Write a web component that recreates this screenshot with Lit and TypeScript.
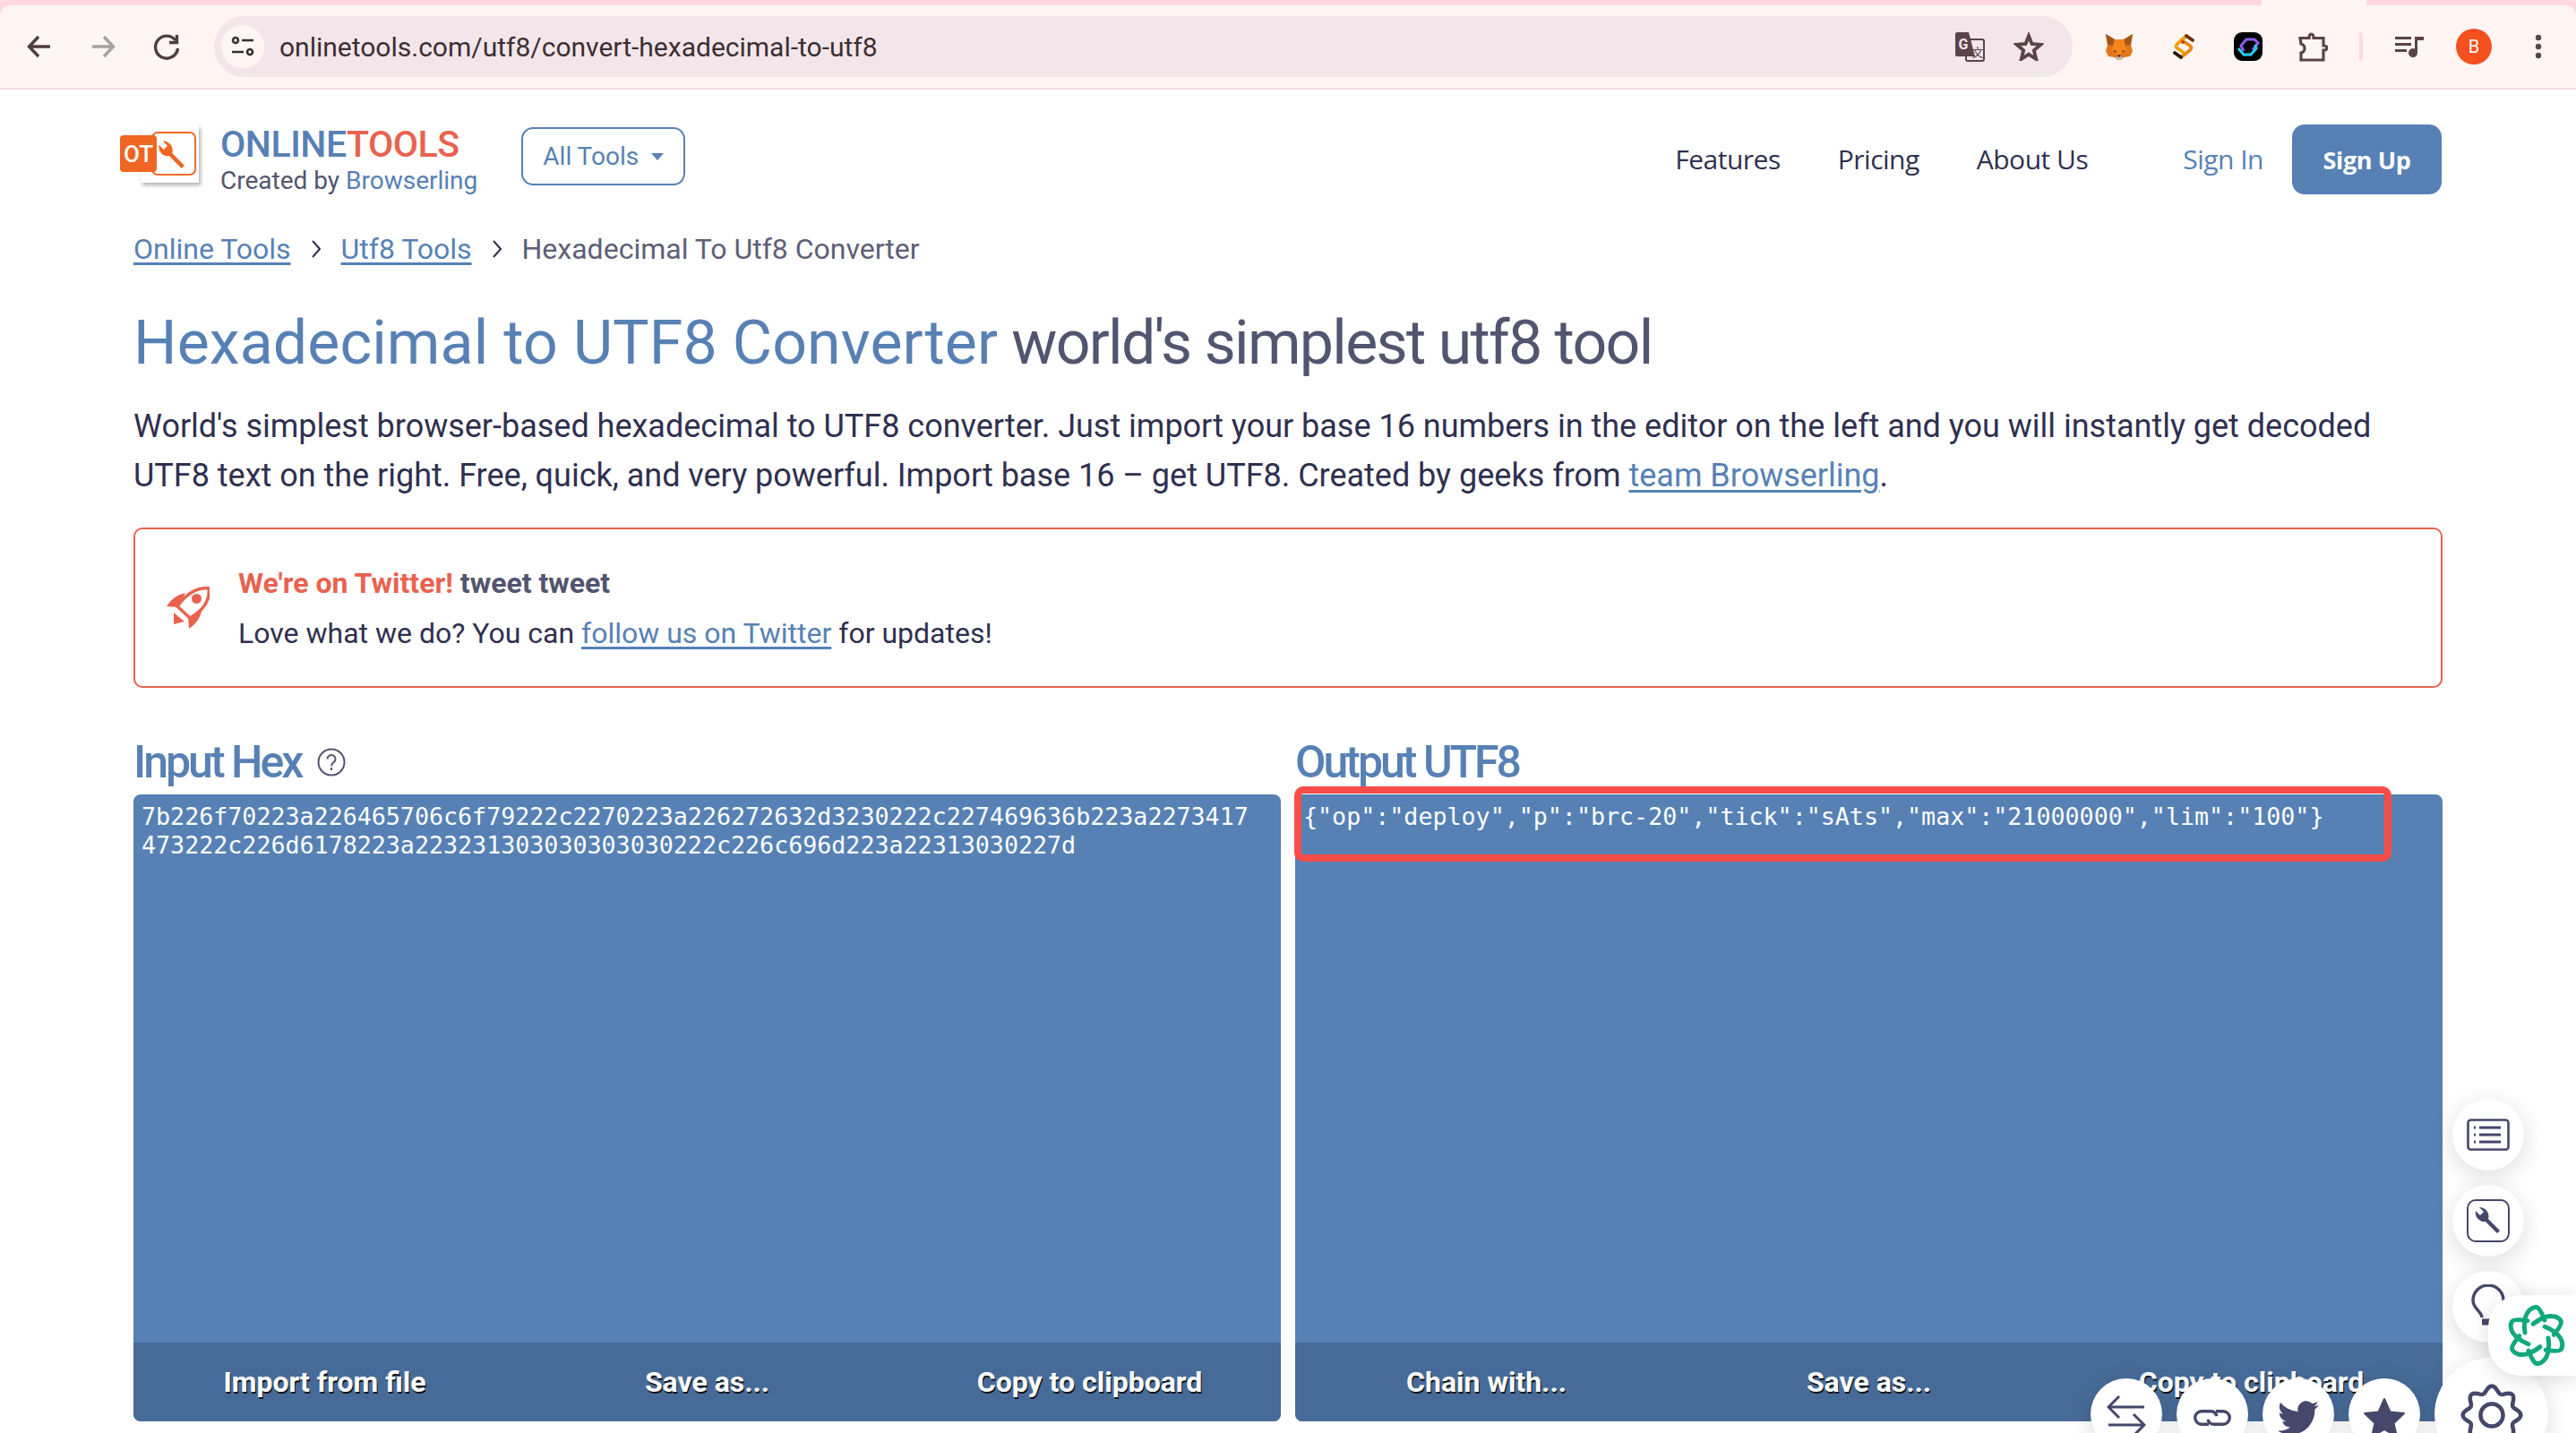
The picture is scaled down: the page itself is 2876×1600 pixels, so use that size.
import { LitElement, css, html, svg } from 'lit';
import { customElement } from 'lit/decorators.js';

const HEX = '7b226f70223a226465706c6f79222c2270223a226272632d3230222c227469636b223a227341747 3222c226d6178223a223231303030303030222c226c696d223a22313030227d'.replace(' ', '');
const UTF8 = '{"op":"deploy","p":"brc-20","tick":"sAts","max":"21000000","lim":"100"}';
const WRENCH = 'M10 13l5 5 4-4-5-5A10 10 0 0 1 24 22l13 13-3 3-13-13A10 10 0 0 1 10 13z';

// scalloped outline for the settings button
function gearPath(lobes: number, outer: number, inner: number) {
    const steps = lobes * 12;
    let d = '';
    for (let i = 0; i <= steps; i++) {
        const a = (i / steps) * Math.PI * 2;
        const r = (outer + inner) / 2 + ((outer - inner) / 2) * Math.cos(a * lobes);
        d += `${i ? 'L' : 'M'}${(40 + r * Math.sin(a)).toFixed(2)} ${(40 - r * Math.cos(a)).toFixed(2)}`;
    }
    return d + 'Z';
}

@customElement('app-root')
export class AppRoot extends LitElement {
    static styles = css`
      :host {
        display: block;
        position: relative;
        width: 2876px;
        height: 1600px;
        overflow: hidden;
        background: #fff;
        font-family: Roboto, sans-serif;
        color: #2f3050;
      }

      a {
        color: #5781b5;
        text-decoration: underline;
        text-underline-offset: 4px;
      }

      /* browser chrome */
      .chrome {
        background: #ffd9e0;
      }

      .tabs {
        height: 6px;
        padding-left: 2525px;
      }

      .tab {
        width: 117px;
        height: 6px;
        background: #fff5f3;
      }

      .toolbar {
        display: flex;
        align-items: center;
        height: 94px;
        box-sizing: border-box;
        background: #fff5f3;
        border-bottom: 2px solid #f6dce2;
        border-radius: 12px 12px 0 0;
      }

      .toolbar svg {
        display: block;
        flex: none;
      }

      .nav-icons {
        display: flex;
        gap: 35px;
        padding-left: 26px;
      }

      .omnibox {
        display: flex;
        align-items: center;
        width: 2075px;
        height: 68px;
        margin-left: 35px;
        padding-left: 8px;
        box-sizing: border-box;
        border-radius: 34px;
        background: #f3e6ea;
      }

      .tune {
        display: flex;
        align-items: center;
        justify-content: center;
        width: 48px;
        height: 48px;
        border-radius: 50%;
        background: #fff5f3;
      }

      .url {
        margin-left: 17px;
        flex: 1;
        font-size: 30px;
        color: #3b2f33;
      }

      .omni-actions {
        display: flex;
        align-items: center;
        gap: 32px;
        padding-right: 32px;
      }

      .extensions {
        display: flex;
        align-items: center;
        margin-left: 16px;
      }

      .ext {
        display: flex;
        justify-content: center;
        align-items: center;
        width: 72px;
      }

      .divider {
        width: 4px;
        height: 32px;
        margin: 0 16px;
        background: #ffd9e0;
        border-radius: 2px;
      }

      .avatar {
        width: 40px;
        height: 40px;
        border-radius: 50%;
        background: #f4511e;
        color: #fff;
        font-size: 20px;
        line-height: 40px;
        text-align: center;
      }

      /* site header */
      .header {
        display: flex;
        align-items: flex-start;
        padding: 39px 150px 0 134px;
      }

      .logo {
        flex: none;
        margin-top: 8px;
      }

      .brand {
        height: 78px;
        margin-left: 12px;
      }

      .brand-name {
        font-size: 41px;
        line-height: 45px;
        font-weight: 500;
        letter-spacing: -0.45px;
        color: #5781b5;
      }

      .brand-name span {
        color: #e8634f;
      }

      .brand-sub {
        font-size: 28px;
        line-height: 35px;
        color: #52556f;
      }

      .brand-sub span {
        color: #5781b5;
      }

      .all-tools {
        display: flex;
        align-items: center;
        gap: 14px;
        height: 65px;
        box-sizing: border-box;
        margin: 3px 0 0 49px;
        padding: 0 22px;
        border: 2px solid #5781b5;
        border-radius: 13px;
        font-size: 28px;
        color: #5781b5;
      }

      .caret {
        width: 0;
        height: 0;
        border: 7px solid transparent;
        border-top: 8px solid #5781b5;
        border-bottom: 0;
      }

      .menu {
        display: flex;
        align-items: center;
        gap: 64px;
        height: 76px;
        margin-left: auto;
        font-family: 'Open Sans', sans-serif;
        font-size: 30px;
        font-weight: 500;
        letter-spacing: -0.5px;
        color: #2f3050;
      }

      .sign-in {
        margin-left: 42px;
        color: #5781b5;
      }

      .sign-up {
        display: flex;
        align-items: center;
        justify-content: center;
        width: 167px;
        height: 78px;
        margin-left: 32px;
        border-radius: 14px;
        background: #5781b5;
        font-family: 'Open Sans', sans-serif;
        font-size: 27px;
        font-weight: 700;
        letter-spacing: -0.4px;
        color: #fff;
      }

      /* page body */
      .page {
        padding: 0 149px;
      }

      .crumbs {
        display: flex;
        align-items: center;
        gap: 23px;
        margin-top: 41px;
        font-size: 32px;
        line-height: 40px;
        color: #5d6077;
      }

      h1 {
        margin: 43px 0 0;
        font-size: 68px;
        line-height: 84px;
        font-weight: 400;
        letter-spacing: -1.7px;
        color: #52556f;
      }

      h1 span {
        letter-spacing: 0.12px;
        color: #5781b5;
      }

      .intro {
        margin: 24px 0 0;
        font-size: 36px;
        line-height: 55px;
        letter-spacing: -0.012px;
        color: #2f3050;
      }

      .notice {
        display: flex;
        align-items: center;
        gap: 32px;
        height: 179px;
        box-sizing: border-box;
        margin-top: 30px;
        padding-left: 35px;
        border: 2px solid #e8634f;
        border-radius: 10px;
      }

      .notice-text {
        font-size: 32px;
        line-height: 56px;
      }

      .notice-head {
        font-weight: 700;
        color: #52556f;
      }

      .notice-head span {
        color: #e8634f;
      }

      .tools {
        display: grid;
        grid-template-columns: 1281px 1281px;
        gap: 16px;
        margin-top: 52px;
      }

      .tool {
        position: relative;
      }

      h2 {
        display: flex;
        align-items: center;
        gap: 18px;
        height: 60px;
        box-sizing: border-box;
        margin: 0 0 7px;
        padding-top: 2px;
        font-size: 50px;
        font-weight: 500;
        letter-spacing: -3px;
        color: #5781b5;
      }

      .panel {
        display: flex;
        flex-direction: column;
        height: 700px;
        border-radius: 8px;
        overflow: hidden;
        background: #5781b5;
      }

      .panel-text {
        flex: 1;
        padding: 9px 30px 0 9px;
        font-family: 'DejaVu Sans Mono', monospace;
        font-size: 26.67px;
        line-height: 32px;
        word-break: break-all;
        color: #fff;
      }

      .panel-foot {
        display: grid;
        grid-template-columns: repeat(3, 1fr);
        align-items: center;
        height: 88px;
        background: #476b98;
      }

      .panel-foot span {
        font-size: 32px;
        font-weight: 700;
        text-align: center;
        color: #fff;
        text-shadow: 1px 2px 0 #111;
      }

      .highlight {
        position: absolute;
        top: 58px;
        left: -1px;
        width: 1225px;
        height: 84px;
        box-sizing: border-box;
        border: 8px solid #f84c48;
        border-radius: 10px;
      }

      /* floating widgets over the page */
      .fab {
        display: flex;
        align-items: center;
        justify-content: center;
        width: 80px;
        height: 80px;
        flex: none;
        border-radius: 50%;
        background: #fff;
        box-shadow: 0 6px 26px rgba(0, 0, 0, 0.14);
      }

      .fab-column {
        position: absolute;
        left: 2738px;
        top: 1227px;
        display: flex;
        flex-direction: column;
        gap: 16px;
      }

      .fab-row {
        position: absolute;
        left: 2334px;
        top: 1539px;
        display: flex;
        gap: 16px;
      }

      .fab-row svg {
        margin-top: 8px;
      }

      .fab-row .arrows {
        margin-top: 0;
      }

      .fab-gear {
        position: absolute;
        left: 2718px;
        top: 1516px;
        width: 127px;
        height: 127px;
      }

      .assistant {
        position: absolute;
        left: 2778px;
        top: 1446px;
        display: flex;
        align-items: center;
        width: 98px;
        height: 90px;
        padding-left: 20px;
        box-sizing: border-box;
        border-radius: 36px 0 0 36px;
        background: #fff;
        box-shadow: 0 4px 22px rgba(0, 0, 0, 0.14);
      }
    `;

    private arrowIcons() {
        return html`
            <div class="nav-icons">
                <svg width="36" height="36" viewBox="0 0 36 36" fill="none" stroke="#4f3d42" stroke-width="3.4"><path d="M30 18H7M17 7 6.500 18 17 29"/></svg>
                <svg width="36" height="36" viewBox="0 0 36 36" fill="none" stroke="#a9a0a2" stroke-width="3.4"><path d="M6 18h23M19 7l10.500 11L19 29"/></svg>
                <svg width="36" height="36" viewBox="0 0 36 36" fill="none" stroke="#4f3d42" stroke-width="3.4"><path d="M28 11a12.500 12.500 0 1 0 2.500 9"/><path d="M29.500 5v8.500H21" /></svg>
            </div>
        `;
    }

    private extensionIcons() {
        return html`
            <div class="extensions">
                <div class="ext">
                    <svg width="32" height="30" viewBox="0 0 32 30">
                        <path fill="#e2761b" d="M1 1l10 6h10l10-6-2 12 2 7-3 6-7 1-3 3h-4l-3-3-7-1-3-6 2-7z"/>
                        <path fill="#a3561a" d="M1 1l10 6-2 7-6-1zM31 1L21 7l2 7 6-1z"/>
                        <path fill="#f6851b" d="M11 7h10l2 7 1 6-8 5-8-5 1-6z"/>
                        <path fill="#763d16" d="M9 20l3-1 1 3zM23 20l-3-1-1 3z"/>
                        <path fill="#c9b9aa" d="M12 27l2 3h4l2-3-4-2z"/>
                        <path fill="#233447" d="M14 25l2 2 2-2-2-1z"/>
                    </svg>
                </div>
                <div class="ext">
                    <svg width="24" height="30" viewBox="0 0 24 30" fill="none" stroke-width="3.800" stroke-linecap="round" stroke-linejoin="round">
                        <path stroke="#f59e0b" d="M15 3 5 12q-3 3 0 5l6 4"/>
                        <path stroke="#6b3410" d="M15 3l7 5"/>
                        <path stroke="#e8870e" d="M13 10l6 4q3 2 0 5L9 27"/>
                        <path stroke="#2a1608" d="M2 22l7 5"/>
                        <circle cx="11" cy="10" r="2" fill="#c2410c"/>
                    </svg>
                </div>
                <div class="ext">
                    <svg width="32" height="32" viewBox="0 0 32 32" fill="none" stroke-width="3">
                        <rect width="32" height="32" rx="9" fill="#000"/>
                        <path stroke="#8b5cf6" d="M11 21 8 15l6-7h9l4 4-6 8"/>
                        <path stroke="#22d3ee" d="M5 18l6 7h8l6-7-1-4"/>
                    </svg>
                </div>
                <div class="ext">
                    <svg width="33" height="33" viewBox="0 0 33 33" fill="none" stroke="#5a444a" stroke-width="3.200"><path d="M2 6.500h10Q12 2 14.500 2T17 6.500h11V15q4 0 4 2.500T28 20v11H3v-8q4-1 4-5t-4-5z"/></svg>
                </div>
                <div class="divider"></div>
                <div class="ext">
                    <svg width="32" height="24" viewBox="0 0 32 24" fill="#5a444a"><path d="M0 1h18v3H0zM0 8h18v3H0zM0 15h13v3H0z"/><path d="M22 1h10v4h-7v14a5 5 0 1 1-3-4.500z"/></svg>
                </div>
                <div class="ext"><div class="avatar">B</div></div>
                <div class="ext">
                    <svg width="10" height="28" viewBox="0 0 10 28" fill="#5a444a"><circle cx="5" cy="4" r="3.200"/><circle cx="5" cy="14" r="3.200"/><circle cx="5" cy="24" r="3.200"/></svg>
                </div>
            </div>
        `;
    }

    private logo() {
        return html`
            <svg class="logo" width="100" height="58" viewBox="0 0 100 58" style="overflow: visible">
                <rect x="23" y="-7" width="65" height="64" fill="#fff" style="filter: drop-shadow(2px 3px 2px rgba(0,0,0,.3))"/>
                <rect x="36" y="1" width="48" height="47" rx="6" fill="#fff" stroke="#ef6a2b" stroke-width="2"/>
                <rect y="4" width="41" height="41" rx="4" fill="#ef6522"/>
                <text x="20.500" y="33.500" text-anchor="middle" font-family="Roboto, sans-serif" font-size="26" font-weight="500" fill="#fff">OT</text>
                <path fill="#ef6522" transform="translate(33 1) scale(1.05)" d=${WRENCH}/>
            </svg>
        `;
    }

    private panelTool(title: string, text: string, actions: string[], help = false, marked = false) {
        return html`
            <section class="tool">
                <h2>
                    ${title}
                    ${help
                        ? html`<svg width="32" height="32" viewBox="0 0 32 32" fill="none" stroke="#52556f" stroke-width="2"><circle cx="16" cy="16" r="14.500"/><path d="M11.500 12.500a4.500 4.500 0 1 1 7 3.700c-1.500 1-2.500 2-2.500 4M16 22v3"/></svg>`
                        : ''}
                </h2>
                <div class="panel">
                    <div class="panel-text">${text}</div>
                    <div class="panel-foot">${actions.map((a) => html`<span>${a}</span>`)}</div>
                </div>
                ${marked ? html`<div class="highlight"></div>` : ''}
            </section>
        `;
    }

    private floatingWidgets() {
        const ink = '#45476b';
        return html`
            <div class="fab-column">
                <div class="fab">
                    <svg width="48" height="36" viewBox="0 0 48 36" fill="none" stroke="${ink}" stroke-width="2.600"><rect x="1.500" y="1.500" width="45" height="33" rx="3"/><path stroke-width="2.800" d="M14 10h24M14 18h24M14 26h24M8 10h2M8 18h2M8 26h2"/></svg>
                </div>
                <div class="fab">
                    <svg width="48" height="48" viewBox="0 0 48 48" fill="none"><rect x="1" y="1" width="46" height="46" rx="9" stroke="${ink}" stroke-width="2"/><path fill="${ink}" d=${WRENCH}/></svg>
                </div>
                <div class="fab">
                    <svg width="38" height="50" viewBox="0 0 38 50" fill="none" stroke="${ink}" stroke-width="3.400"><path d="M12 37c0-6-10-10-10-19a17 17 0 0 1 34 0c0 9-10 13-10 19"/><path stroke-width="7" d="M12 42h14"/></svg>
                </div>
            </div>
            <div class="fab-gear fab">
                <svg width="72" height="72" viewBox="0 0 80 80" fill="none" stroke="${ink}" stroke-width="5"><path d=${gearPath(8, 36, 28)}/><circle cx="40" cy="40" r="14"/></svg>
            </div>
            <div class="assistant">
                <svg width="68" height="68" viewBox="-34 -34 68 68" fill="none" stroke="#10a97c" stroke-width="5" stroke-linecap="round">
                    ${[0, 60, 120, 180, 240, 300].map(
                        (r) => svg`<path transform="rotate(${r})" d="M9-17C6-25 3-31 0-31.500C-6-32-11-26-12.500-20C-14-14-14-9-13-3"/>`
                    )}
                </svg>
            </div>
            <div class="fab-row">
                <div class="fab">
                    <svg class="arrows" width="44" height="44" viewBox="0 0 44 44" fill="none" stroke="${ink}" stroke-width="3"><path d="M42 14H3M14 2 2 14l12 12M2 34h39M30 22l12 12-12 12"/></svg>
                </div>
                <div class="fab">
                    <svg width="42" height="18" viewBox="0 0 42 18" fill="none" stroke="${ink}" stroke-width="3.400"><path d="M17 16.300H9a7.300 7.300 0 0 1 0-14.600h10a7.300 7.300 0 0 1 7 5.500"/><path d="M25 1.700h8a7.300 7.300 0 0 1 0 14.600H23a7.300 7.300 0 0 1-7-5.500"/></svg>
                </div>
                <div class="fab">
                    <svg width="46" height="46" viewBox="0 0 24 24" fill="${ink}"><path d="M23.953 4.570a10 10 0 0 1-2.825.775 4.958 4.958 0 0 0 2.163-2.723c-.951.555-2.005.959-3.127 1.184a4.920 4.920 0 0 0-8.384 4.482C7.690 8.095 4.067 6.130 1.640 3.162a4.822 4.822 0 0 0-.666 2.475c0 1.710.870 3.213 2.188 4.096a4.904 4.904 0 0 1-2.228-.616v.060a4.923 4.923 0 0 0 3.946 4.827 4.996 4.996 0 0 1-2.212.085 4.936 4.936 0 0 0 4.604 3.417 9.867 9.867 0 0 1-6.102 2.105c-.390 0-.779-.023-1.170-.067a13.995 13.995 0 0 0 7.557 2.209c9.053 0 13.998-7.496 13.998-13.985 0-.210 0-.420-.015-.630A9.935 9.935 0 0 0 24 4.590z"/></svg>
                </div>
                <div class="fab">
                    <svg width="48" height="46" viewBox="0 0 48 46" fill="${ink}" stroke="${ink}" stroke-width="2" stroke-linejoin="round"><path d="M24 2l6.500 14.500L46 18 34.500 29l3.500 15-14-8-14 8 3.500-15L2 18l15.500-1.500z"/></svg>
                </div>
            </div>
        `;
    }

    protected render() {
        return html`
            <div class="chrome">
                <div class="tabs"><div class="tab"></div></div>
                <div class="toolbar">
                    ${this.arrowIcons()}
                    <div class="omnibox">
                        <div class="tune">
                            <svg width="26" height="26" viewBox="0 0 26 26" fill="none" stroke="#3b2f33" stroke-width="2.600"><circle cx="5" cy="6" r="3"/><path d="M12 6h13M1 19h13"/><circle cx="21" cy="19" r="3"/></svg>
                        </div>
                        <div class="url">onlinetools.com/utf8/convert-hexadecimal-to-utf8</div>
                        <div class="omni-actions">
                            <svg width="33" height="33" viewBox="0 0 33 33">
                                <rect x="12" y="8" width="20" height="24" rx="2" fill="#f3e6ea" stroke="#5a444a" stroke-width="2"/>
                                <path fill="#5a444a" d="M2 0h13l7 27H2a2 2 0 0 1-2-2V2a2 2 0 0 1 2-2z"/>
                                <text x="9" y="19" text-anchor="middle" font-family="Roboto, sans-serif" font-size="16" font-weight="700" fill="#f3e6ea">G</text>
                                <text x="25" y="27" text-anchor="middle" font-family="'Noto Sans CJK SC', sans-serif" font-size="13" fill="#5a444a">文</text>
                            </svg>
                            <svg width="34" height="32" viewBox="0 0 34 32" fill="none" stroke="#5a444a" stroke-width="3.800" stroke-linejoin="miter"><path d="M17 4l3.500 9 10 .800-7.700 6.400 2.500 9.800L17 24.600 8.700 30l2.500-9.800-7.700-6.400 10-.800z"/></svg>
                        </div>
                    </div>
                    ${this.extensionIcons()}
                </div>
            </div>

            <header class="header">
                ${this.logo()}
                <div class="brand">
                    <div class="brand-name">ONLINE<span>TOOLS</span></div>
                    <div class="brand-sub">Created by <span>Browserling</span></div>
                </div>
                <div class="all-tools">All Tools <i class="caret"></i></div>
                <nav class="menu">
                    <span>Features</span>
                    <span>Pricing</span>
                    <span>About Us</span>
                    <span class="sign-in">Sign In</span>
                </nav>
                <div class="sign-up">Sign Up</div>
            </header>

            <main class="page">
                <div class="crumbs">
                    <a>Online Tools</a>
                    <svg width="10" height="20" viewBox="0 0 10 20" fill="none" stroke="#2f3050" stroke-width="2"><path d="M1 1l8 9-8 9"/></svg>
                    <a>Utf8 Tools</a>
                    <svg width="10" height="20" viewBox="0 0 10 20" fill="none" stroke="#2f3050" stroke-width="2"><path d="M1 1l8 9-8 9"/></svg>
                    <span>Hexadecimal To Utf8 Converter</span>
                </div>
                <h1><span>Hexadecimal to UTF8 Converter</span> world's simplest utf8 tool</h1>
                <p class="intro">
                    World's simplest browser-based hexadecimal to UTF8 converter. Just import your base 16 numbers in the editor on the left and you will instantly get decoded
                    UTF8 text on the right. Free, quick, and very powerful. Import base 16 – get UTF8. Created by geeks from <a>team Browserling</a>.
                </p>
                <div class="notice">
                    <svg width="48" height="48" viewBox="16 15 48 48">
                        <path fill="#e8634f" d="M37 22c-9 2-16 7-21 15l13 1zM56 38c-1 9-6 18-15 24l-1-13z"/>
                        <path fill="#e8634f" d="M24 44l12 10-12 3z"/>
                        <path fill="#fff" stroke="#e8634f" stroke-width="3.500" stroke-linejoin="round" d="M63 16.500C48 16 37 24 28 37l14 13c14-8 23-19 21-33.500z"/>
                        <circle cx="49.500" cy="28.500" r="5.500" fill="#e8634f"/>
                    </svg>
                    <div class="notice-text">
                        <div class="notice-head"><span>We're on Twitter!</span> tweet tweet</div>
                        <div>Love what we do? You can <a>follow us on Twitter</a> for updates!</div>
                    </div>
                </div>
                <div class="tools">
                    ${this.panelTool('Input Hex', HEX, ['Import from file', 'Save as...', 'Copy to clipboard'], true)}
                    ${this.panelTool('Output UTF8', UTF8, ['Chain with...', 'Save as...', 'Copy to clipboard'], false, true)}
                </div>
            </main>

            ${this.floatingWidgets()}
        `;
    }
}
